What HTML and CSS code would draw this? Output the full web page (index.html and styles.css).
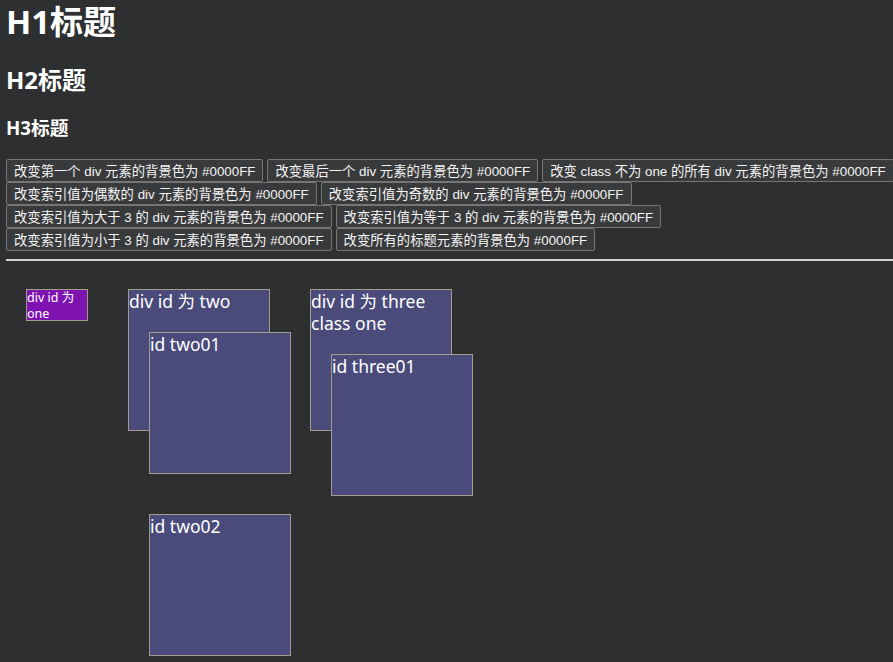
FILE: index.html
```html
<!DOCTYPE html>
<html lang="zh-CN">
<head>
<meta charset="utf-8">
<title>选择器</title>
<link rel="stylesheet" href="styles.css">
</head>
<body>
<h1 class="t1">H1标题</h1>
<h2 class="t2">H2标题</h2>
<h3 class="t3">H3标题</h3>
<div class="btn-row">
  <button class="btn">改变第一个 div 元素的背景色为 #0000FF</button>
  <button class="btn">改变最后一个 div 元素的背景色为 #0000FF</button>
  <button class="btn">改变 class 不为 one 的所有 div 元素的背景色为 #0000FF</button>
</div>
<div class="btn-row">
  <button class="btn">改变索引值为偶数的 div 元素的背景色为 #0000FF</button>
  <button class="btn">改变索引值为奇数的 div 元素的背景色为 #0000FF</button>
</div>
<div class="btn-row">
  <button class="btn">改变索引值为大于 3 的 div 元素的背景色为 #0000FF</button>
  <button class="btn">改变索引值为等于 3 的 div 元素的背景色为 #0000FF</button>
</div>
<div class="btn-row">
  <button class="btn">改变索引值为小于 3 的 div 元素的背景色为 #0000FF</button>
  <button class="btn">改变所有的标题元素的背景色为 #0000FF</button>
</div>
<hr class="rule">
<div class="stage">
  <div class="box mini purple">div id 为 one</div>
  <div class="box">div id 为 two
    <div class="box">id two01</div>
    <div class="box">id two02</div>
  </div>
  <div class="box">div id 为 three class one
    <div class="box">id three01</div>
  </div>
</div>
</body>
</html>
```

FILE: styles.css
```css
html {
  background: #2e2f31;
  min-height: 100%;
}
body {
  margin: 0;
  padding: 0 6px;
  min-height: 662px;
  color: #ffffff;
  font-family: "Noto Sans", "Noto Sans CJK SC", sans-serif;
}
.t1, .t2, .t3 {
  font-family: "Noto Sans", "Noto Sans CJK SC", sans-serif;
  font-weight: bold;
  margin: 0;
}
.t1 {
  font-size: 33px;
  line-height: 44px;
  margin-bottom: 19px;
}
.t2 {
  font-size: 24px;
  line-height: 34px;
  margin-bottom: 18px;
}
.t3 {
  font-size: 18.72px;
  line-height: 26px;
  margin-bottom: 18px;
}
.btn-row {
  display: flex;
  gap: 4px;
}
.btn {
  height: 23px;
  padding: 0 7px;
  margin: 0;
  font-family: "Liberation Sans", "Noto Sans CJK SC", sans-serif;
  font-size: 13.333px;
  color: #f4f4f4;
  background: #393a3c;
  border: 1px solid #767676;
  border-radius: 2px;
  white-space: nowrap;
}
.rule {
  height: 2px;
  border: 0;
  background: #d2d2d2;
  margin: 8px -6px 8px 0;
}
.stage {
  display: flex;
  align-items: flex-start;
  min-height: 380px;
}
.box {
  box-sizing: content-box;
  width: 140px;
  height: 140px;
  margin: 20px;
  flex-shrink: 0;
  display: flex;
  flex-direction: column;
  align-items: flex-start;
  background: #4a4a7b;
  border: 1px solid #a39b8b;
  font-size: 17.5px;
  line-height: 22px;
  color: #ffffff;
}
.box .box {
  margin: 20px 0 20px 20px;
}
.mini {
  width: 60px;
  height: 30px;
  font-size: 12.5px;
  line-height: 16px;
  display: block;
}
.purple {
  background: #7f13b1;
}
```
